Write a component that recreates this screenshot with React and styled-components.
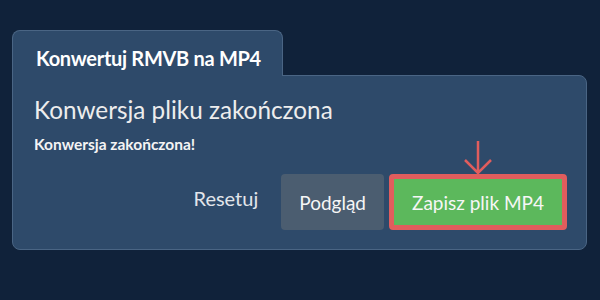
import React from "react";
import styled, { createGlobalStyle } from "styled-components";

const Global = createGlobalStyle`
  html, body { margin: 0; padding: 0; background: #10223a; }
  body { font-family: Lato, "Noto Sans", sans-serif; width: 600px; height: 300px; overflow: hidden; }
`;

const Page = styled.div`
  padding: 30px 13px 0 12px;
`;

const Tab = styled.div`
  position: relative;
  z-index: 1;
  width: 271px;
  height: 46px;
  box-sizing: border-box;
  margin-bottom: -1px;
  padding: 15px 0 0 23px;
  background: #2e4a6a;
  border: 1px solid #4a6584;
  border-bottom: none;
  border-radius: 8px 8px 0 0;
  color: #ffffff;
  font-weight: 700;
  font-size: 20px;
  line-height: 24px;
  letter-spacing: -0.3px;
`;

const Card = styled.div`
  box-sizing: border-box;
  height: 175px;
  padding: 19px 19px 19px 21px;
  background: #2e4a6a;
  border: 1px solid #4a6584;
  border-radius: 0 8px 8px 8px;
  display: flex;
  flex-direction: column;
`;

const Heading = styled.h2`
  margin: 0;
  font-weight: 400;
  font-size: 24.3px;
  line-height: 29px;
  color: #ededed;
`;

const Message = styled.p`
  margin: 11px 0 0;
  font-weight: 700;
  font-size: 15.5px;
  line-height: 19px;
  color: #f4f4f4;
`;

const Actions = styled.div`
  margin-top: auto;
  display: flex;
  justify-content: flex-end;
  align-items: center;
  gap: 5px;
`;

const LinkButton = styled.button`
  background: none;
  border: none;
  padding: 0 18px 8px 0;
  font-family: inherit;
  font-size: 20px;
  color: #e2e6ea;
  cursor: pointer;
`;

const Button = styled.button`
  position: relative;
  height: 56px;
  box-sizing: border-box;
  padding: 0 18px;
  border-radius: 4px;
  border: ${(p) => (p.$highlight ? "5px solid #e05d5d" : "none")};
  background: ${(p) => (p.$variant === "primary" ? "#5cb85c" : "#4b5d70")};
  color: #f6f6f6;
  font-family: inherit;
  font-size: 19px;
  cursor: pointer;
`;

const Pointer = styled.svg`
  position: absolute;
  left: 50%;
  top: -39px;
  transform: translateX(-50%);
  overflow: visible;
`;

export default function App() {
  return (
    <>
      <Global />
      <Page>
        <Tab>Konwertuj RMVB na MP4</Tab>
        <Card>
          <Heading>Konwersja pliku zakończona</Heading>
          <Message>Konwersja zakończona!</Message>
          <Actions>
            <LinkButton>Resetuj</LinkButton>
            <Button>Podgląd</Button>
            <Button $variant="primary" $highlight>
              <Pointer width="30" height="36" viewBox="0 0 30 36">
                <path
                  d="M15 1 V33 M2 20 L15 33 L28 20"
                  fill="none"
                  stroke="#e05d5d"
                  strokeWidth="2.5"
                />
              </Pointer>
              Zapisz plik MP4
            </Button>
          </Actions>
        </Card>
      </Page>
    </>
  );
}
